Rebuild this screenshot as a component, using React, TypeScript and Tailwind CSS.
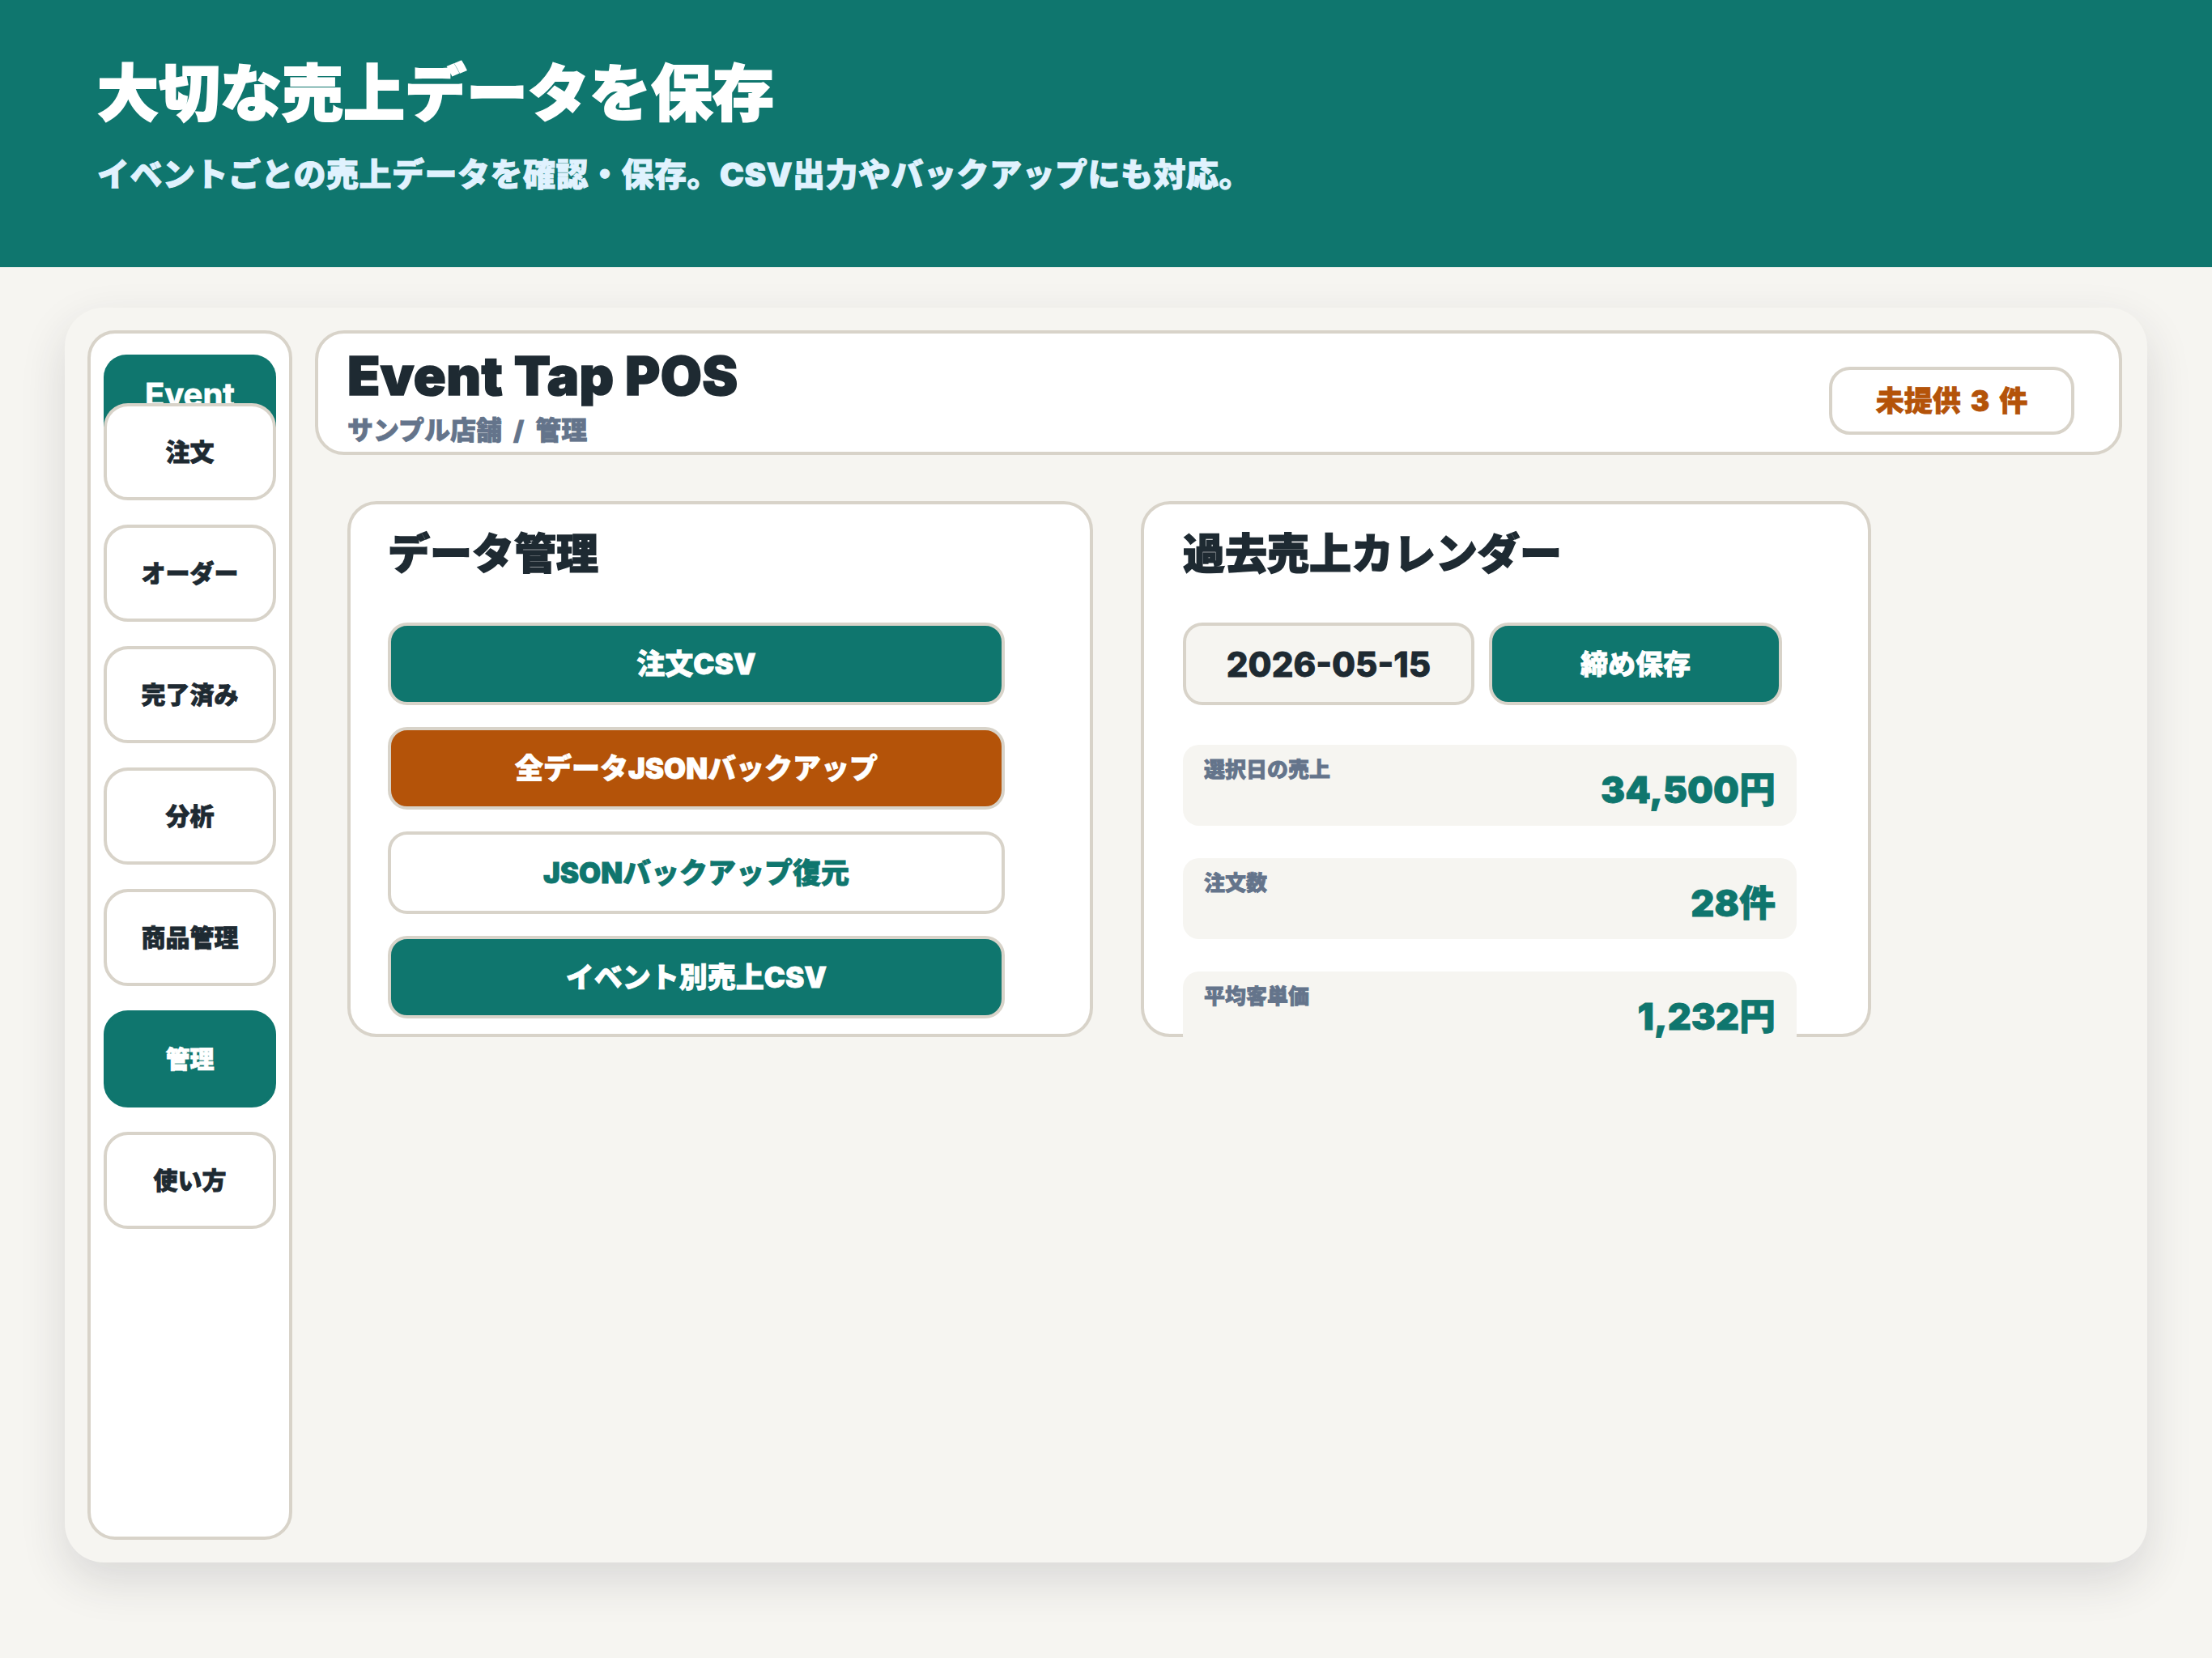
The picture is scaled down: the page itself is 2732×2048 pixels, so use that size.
import React from "react";

type Tone = "teal" | "orange" | "plain";

const navItems = ["注文", "オーダー", "完了済み", "分析", "商品管理", "管理", "使い方"];
const activeNav = "管理";

const dataActions: { label: string; tone: Tone }[] = [
  { label: "注文CSV", tone: "teal" },
  { label: "全データJSONバックアップ", tone: "orange" },
  { label: "JSONバックアップ復元", tone: "plain" },
  { label: "イベント別売上CSV", tone: "teal" },
];

const toneClass: Record<Tone, string> = {
  teal: "bg-[#0f766e] text-white",
  orange: "bg-[#b45309] text-white",
  plain: "bg-white text-[#0f766e]",
};

const stats = [
  { label: "選択日の売上", value: "34,500円" },
  { label: "注文数", value: "28件" },
  { label: "平均客単価", value: "1,232円" },
];

const Sidebar = () => (
  <aside className="flex w-[253px] shrink-0 flex-col rounded-[34px] border-4 border-[#d8d3c9] bg-white px-4 pt-[26px]">
    <div className="h-[90px] rounded-t-[28px] bg-[#0f766e] pt-[26px] text-center text-[40px] leading-[48px] font-bold text-white">
      Event
    </div>
    <nav className="relative -mt-[30px] flex flex-col gap-[30px]">
      {navItems.map(item => (
        <button
          key={item}
          className={`flex h-[120px] items-center justify-center rounded-[30px] border-4 text-[30px] font-black ${
            item === activeNav
              ? "border-[#0f766e] bg-[#0f766e] text-white"
              : "border-[#d8d3c9] bg-white text-[#1e2a32]"
          }`}
        >
          {item}
        </button>
      ))}
    </nav>
  </aside>
);

const TopBar = () => (
  <div className="flex h-[154px] shrink-0 items-start justify-between rounded-[36px] border-4 border-[#d8d3c9] bg-white pr-[55px] pl-[36px]">
    <div className="pt-[14px]">
      <h2 className="text-[66px] leading-[76px] font-black tracking-[0.4px] text-[#1e2a32] [-webkit-text-stroke-width:1.5px]">
        Event Tap POS
      </h2>
      <p className="mt-[9px] text-[32px] leading-[42px] font-black text-[#64748b]">
        サンプル店舗<span className="mx-[14px]">/</span>管理
      </p>
    </div>
    <div className="mt-[41px] flex h-[84px] w-[303px] items-center justify-center rounded-[26px] border-4 border-[#d8d3c9] text-[35px] font-black text-[#b45309]">
      未提供<span className="mx-[12px]">3</span>件
    </div>
  </div>
);

const DataPanel = () => (
  <section className="h-[662px] w-[921px] shrink-0 rounded-[36px] border-4 border-[#d8d3c9] bg-white pt-[29px] pl-[46px]">
    <h3 className="text-[52px] leading-[65px] font-black text-[#1e2a32] [-webkit-text-stroke-width:1.5px]">データ管理</h3>
    <div className="mt-[52px] flex w-[762px] flex-col gap-[27px]">
      {dataActions.map(action => (
        <button
          key={action.label}
          className={`flex h-[102px] items-center justify-center rounded-[24px] border-4 border-[#d8d3c9] text-[35px] font-black ${toneClass[action.tone]}`}
        >
          {action.label}
        </button>
      ))}
    </div>
  </section>
);

const CalendarPanel = () => (
  <section className="h-[662px] w-[902px] shrink-0 rounded-[36px] border-4 border-[#d8d3c9] bg-white pt-[29px] pl-[48px]">
    <h3 className="text-[52px] leading-[65px] font-black text-[#1e2a32] [-webkit-text-stroke-width:1.5px]">過去売上カレンダー</h3>
    <div className="mt-[52px] flex gap-[18px]">
      <div className="flex h-[102px] w-[360px] items-center justify-center rounded-[24px] border-4 border-[#d8d3c9] bg-[#f6f5f1] text-[42px] font-extrabold text-[#1e2a32]">
        2026-05-15
      </div>
      <button className="flex h-[102px] w-[362px] items-center justify-center rounded-[24px] border-4 border-[#d8d3c9] bg-[#0f766e] text-[34px] font-black text-white">
        締め保存
      </button>
    </div>
    <div className="mt-[49px] flex w-[758px] flex-col gap-[40px]">
      {stats.map(stat => (
        <div key={stat.label} className="flex h-[100px] items-start justify-between rounded-[20px] bg-[#f6f5f1] px-[26px]">
          <span className="pt-[14px] text-[26px] leading-[34px] font-black text-[#64748b]">{stat.label}</span>
          <span className="pt-[33px] text-[45px] leading-[46px] font-black text-[#0f766e]">{stat.value}</span>
        </div>
      ))}
    </div>
  </section>
);

export default function App() {
  return (
    <div className="min-h-screen bg-[#f6f5f1] pb-[118px] font-['Inter','Noto_Sans_CJK_JP',sans-serif] [-webkit-text-stroke-width:0.8px]">
      <header className="bg-[#0f766e] pt-[70px] pb-[86px] pl-[120px]">
        <h1 className="text-[76px] leading-[91px] font-black text-white [-webkit-text-stroke-width:2px]">大切な売上データを保存</h1>
        <p className="mt-[27px] text-[40px] leading-[56px] font-black tracking-[0.5px] text-[#e0f2fe] [-webkit-text-stroke-width:1px]">
          イベントごとの売上データを確認・保存。CSV出力やバックアップにも対応。
        </p>
      </header>

      <main className="mx-[80px] mt-[50px] flex h-[1550px] gap-[28px] rounded-[48px] bg-[#f6f5f1] py-[28px] pr-[31px] pl-[28px] shadow-[0_22px_56px_rgba(40,45,60,0.14)]">
        <Sidebar />
        <div className="flex flex-1 flex-col">
          <TopBar />
          <div className="flex gap-[59px] px-[40px] pt-[57px]">
            <DataPanel />
            <CalendarPanel />
          </div>
        </div>
      </main>
    </div>
  );
}
